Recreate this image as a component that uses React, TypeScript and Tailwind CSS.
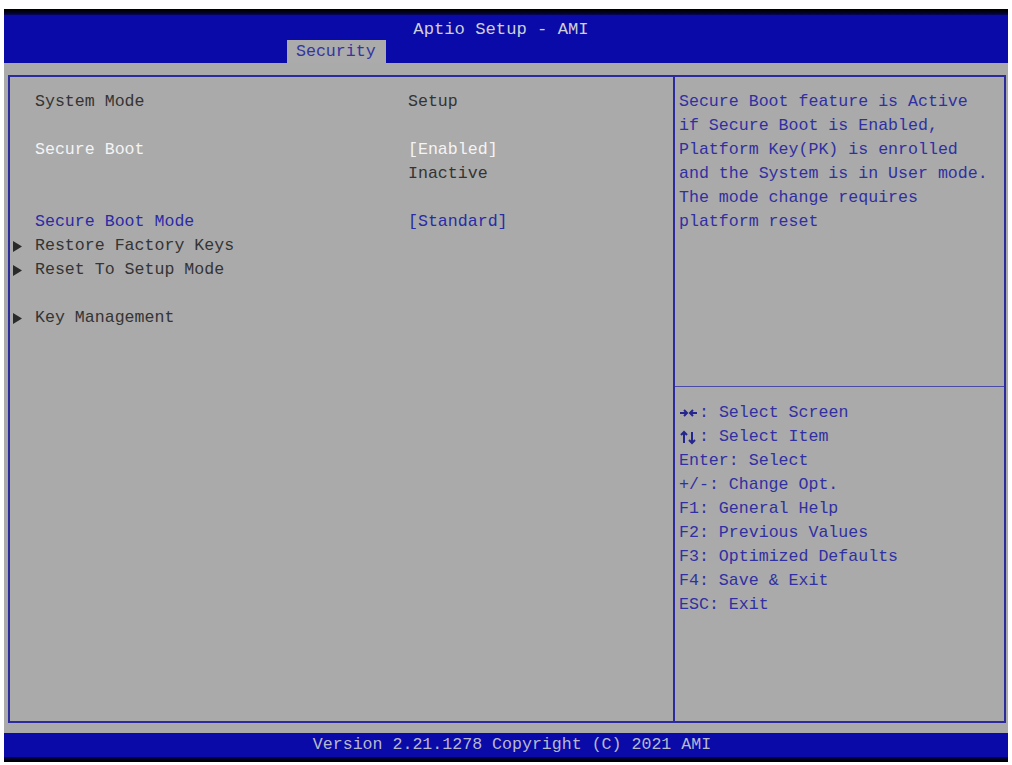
import React from "react";

const mono = "font-['Liberation_Mono','DejaVu_Sans_Mono',monospace]";

type Row = {
    label?: string;
    value?: string;
    labelColor?: string;
    valueColor?: string;
    submenu?: boolean;
};

const rows: Row[] = [
    { label: "System Mode", value: "Setup" },
    {},
    { label: "Secure Boot", value: "[Enabled]", labelColor: "text-[#f4f4f4]", valueColor: "text-[#f4f4f4]" },
    { value: "Inactive" },
    {},
    { label: "Secure Boot Mode", value: "[Standard]", labelColor: "text-[#2b2ba6]", valueColor: "text-[#2b2ba6]" },
    { label: "Restore Factory Keys", submenu: true },
    { label: "Reset To Setup Mode", submenu: true },
    {},
    { label: "Key Management", submenu: true },
];

const helpText = [
    "Secure Boot feature is Active",
    "if Secure Boot is Enabled,",
    "Platform Key(PK) is enrolled",
    "and the System is in User mode.",
    "The mode change requires",
    "platform reset",
];

const LeftRight = () => (
    <svg width="20" height="24" viewBox="0 0 20 24" className="shrink-0">
        <g fill="none" stroke="#25258e" strokeWidth="2">
            <path d="M1 12h7M5 9l3 3-3 3" />
            <path d="M18 12h-7M14 9l-3 3 3 3" />
        </g>
    </svg>
);

const UpDown = () => (
    <svg width="20" height="24" viewBox="0 0 20 24" className="shrink-0">
        <g fill="none" stroke="#25258e" strokeWidth="2">
            <path d="M5 18V7M2 10l3-3 3 3" />
            <path d="M13 7v11M10 15l3 3 3-3" />
        </g>
    </svg>
);

const keys: [React.ReactNode, string][] = [
    [<LeftRight />, ": Select Screen"],
    [<UpDown />, ": Select Item"],
    ["Enter", ": Select"],
    ["+/-", ": Change Opt."],
    ["F1", ": General Help"],
    ["F2", ": Previous Values"],
    ["F3", ": Optimized Defaults"],
    ["F4", ": Save & Exit"],
    ["ESC", ": Exit"],
];

const Arrow = () => (
    <svg width="9" height="11" viewBox="0 0 9 11" className="ml-[3px]">
        <polygon points="0,0 9,5.5 0,11" fill="#2a2a2a" />
    </svg>
);

export default function App() {
    return (
        <div className={`w-[1012px] h-[765px] bg-white pt-[9px] ${mono} text-[16.6px]`}>
            <div className="w-[1004px] ml-[4px] flex flex-col">
                {/* header */}
                <div className="h-[6px] bg-gradient-to-b from-black to-[#06065a]" />
                <div className="h-[48px] bg-[#0a0aa8] flex flex-col items-center relative">
                    <div className="text-[#cfcfd8] text-[17.2px] leading-[24px] pt-[3px] mr-[10px]">
                        Aptio Setup - AMI
                    </div>
                    <div className="absolute left-[283px] bottom-0 w-[99px] h-[23px] bg-[#ababab] text-[#3535a0] pl-[9px] leading-[24px]">
                        Security
                    </div>
                </div>

                {/* body */}
                <div className="h-[670px] bg-[#aaaaaa] pt-[12px] pl-[4px] pr-[2px] pb-[10px]">
                    <div className="h-full border-2 border-[#2b2b9e] flex">
                        <div className="w-[663px] pt-[13px] text-[#343434]">
                            {rows.map((row, i) => (
                                <div key={i} className="h-[24px] flex items-center">
                                    <div className="w-[25px] flex items-center">{row.submenu && <Arrow />}</div>
                                    <div className={`w-[373px] ${row.labelColor ?? "text-[#343434]"}`}>
                                        {row.label}
                                    </div>
                                    <div className={row.valueColor ?? "text-[#343434]"}>{row.value}</div>
                                </div>
                            ))}
                        </div>
                        <div className="flex-1 border-l-2 border-[#2b2b9e] flex flex-col">
                            <div className="h-[310px] pt-[13px] pl-[4px] text-[#3030a2] border-b border-[#4a4aa8]">
                                {helpText.map((line) => (
                                    <div key={line} className="h-[24px] leading-[24px] whitespace-pre">
                                        {line}
                                    </div>
                                ))}
                            </div>
                            <div className="pt-[14px] pl-[4px] text-[#3030a2]">
                                {keys.map(([k, v], i) => (
                                    <div key={i} className="h-[24px] leading-[24px] whitespace-pre flex items-center">
                                        <span className="flex items-center">{k}</span>
                                        <span>{v}</span>
                                    </div>
                                ))}
                            </div>
                        </div>
                    </div>
                </div>

                {/* footer */}
                <div className="h-[24px] bg-[#0a0aa8] flex items-center justify-center text-[#b8b8cc] pl-[12px] leading-[24px]">
                    Version 2.21.1278 Copyright (C) 2021 AMI
                </div>
                <div className="h-[5px] bg-gradient-to-b from-[#06065a] to-black" />
            </div>
        </div>
    );
}
